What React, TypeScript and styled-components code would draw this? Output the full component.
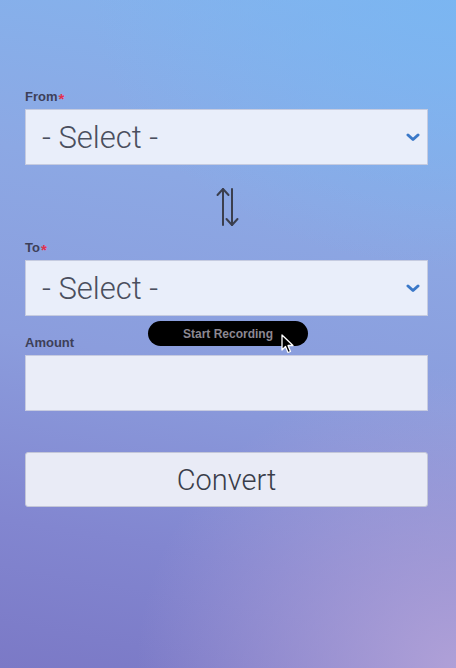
import React from 'react'
import styled, { createGlobalStyle } from 'styled-components'

const GlobalStyle = createGlobalStyle`
  html, body {
    margin: 0;
    padding: 0;
  }

  body {
    font-family: Roboto, 'Liberation Sans', sans-serif;
  }
`

type FieldProps = {
  label: string
  required?: boolean
  children: React.ReactNode
}

function Field(props: FieldProps) {
  return (
    <FieldWrapper>
      <Label>
        {props.label}
        {props.required && <Star>*</Star>}
      </Label>
      {props.children}
    </FieldWrapper>
  )
}

function SelectBox() {
  return (
    <Select>
      <SelectText>- Select -</SelectText>
      <svg width="14" height="9" viewBox="0 0 14 9">
        <path d="M2 2 L7 6.5 L12 2" fill="none" stroke="#3a78c8" strokeWidth="3" strokeLinecap="round" strokeLinejoin="round" />
      </svg>
    </Select>
  )
}

function SwapIcon() {
  return (
    <svg width="26" height="40" viewBox="0 0 26 40">
      <g fill="none" stroke="#3b3f4e" strokeWidth="2" strokeLinecap="round" strokeLinejoin="round">
        <path d="M8 38 L8 2" />
        <path d="M2.5 8 L8 2 L13.5 8" />
        <path d="M17 2 L17 38" />
        <path d="M11.5 32 L17 38 L22.5 32" />
      </g>
    </svg>
  )
}

function Cursor() {
  return (
    <svg width="14" height="20" viewBox="0 0 14 20">
      <path d="M1 1 L1 16 L4.5 12.5 L7 18.5 L9.5 17.5 L7 11.5 L12 11.5 Z" fill="#000" stroke="#fff" strokeWidth="1.3" strokeLinejoin="round" />
    </svg>
  )
}

export default function App() {
  return (
    <Page>
      <GlobalStyle />
      <Form>
        <Field label="From" required>
          <SelectBox />
        </Field>
        <SwapRow>
          <SwapIcon />
        </SwapRow>
        <Field label="To" required>
          <SelectBox />
        </Field>
        <AmountField>
          <Field label="Amount">
            <Input />
          </Field>
        </AmountField>
        <ConvertButton>Convert</ConvertButton>
      </Form>
      <RecordPill>
        Start Recording
        <CursorSpot>
          <Cursor />
        </CursorSpot>
      </RecordPill>
    </Page>
  )
}

const Page = styled.div`
  position: relative;
  height: 668px;
  overflow: hidden;
  background:
    radial-gradient(ellipse 70% 45% at 100% 100%, rgba(178, 162, 216, 0.95), rgba(178, 162, 216, 0) 100%),
    radial-gradient(ellipse 80% 40% at 100% 0%, rgba(122, 182, 242, 0.9), rgba(122, 182, 242, 0) 100%),
    linear-gradient(190deg, #83b4ee 0%, #8ca8e4 30%, #8b9ddd 55%, #8286d0 80%, #7b79c6 100%);
`

const Form = styled.div`
  display: flex;
  flex-direction: column;
  padding: 88px 28px 0 25px;
`

const FieldWrapper = styled.div`
  display: flex;
  flex-direction: column;
`

const Label = styled.div`
  font-family: 'Liberation Sans', Arial, sans-serif;
  font-size: 13px;
  font-weight: 700;
  line-height: 16px;
  color: #3d4058;
  margin-bottom: 4px;
`

const Star = styled.span`
  color: #e2304d;
  font-size: 15px;
  position: relative;
  top: 3px;
  margin-left: 1px;
`

const Select = styled.div`
  box-sizing: border-box;
  height: 56px;
  display: flex;
  align-items: center;
  justify-content: space-between;
  padding: 0 7px 0 16px;
  background: #e9eefa;
  border: 1px solid #c5cbe0;
`

const SelectText = styled.span`
  font-size: 31px;
  font-weight: 300;
  color: #4a4f5e;
`

const SwapRow = styled.div`
  display: flex;
  justify-content: center;
  align-items: flex-start;
  box-sizing: border-box;
  height: 74px;
  padding: 22px 0 0 3px;
`

const AmountField = styled.div`
  margin-top: 19px;
`

const Input = styled.div`
  box-sizing: border-box;
  height: 56px;
  background: #eaedf8;
  border: 1px solid #c7cbe0;
`

const ConvertButton = styled.button`
  box-sizing: border-box;
  margin-top: 41px;
  height: 55px;
  width: 100%;
  background: #e9ebf6;
  border: 1px solid #c3c6d8;
  border-radius: 3px;
  font-family: Roboto, 'Liberation Sans', sans-serif;
  font-size: 29px;
  font-weight: 300;
  color: #3a3d4a;
  padding: 0;
`

const RecordPill = styled.div`
  position: absolute;
  left: 148px;
  top: 321px;
  width: 160px;
  height: 25px;
  border-radius: 13px;
  background: #000;
  display: flex;
  align-items: center;
  justify-content: center;
  font-family: 'Liberation Sans', Arial, sans-serif;
  font-size: 12px;
  font-weight: 700;
  color: #8c8892;
`

const CursorSpot = styled.div`
  position: absolute;
  left: 133px;
  top: 13px;
  line-height: 0;
`
